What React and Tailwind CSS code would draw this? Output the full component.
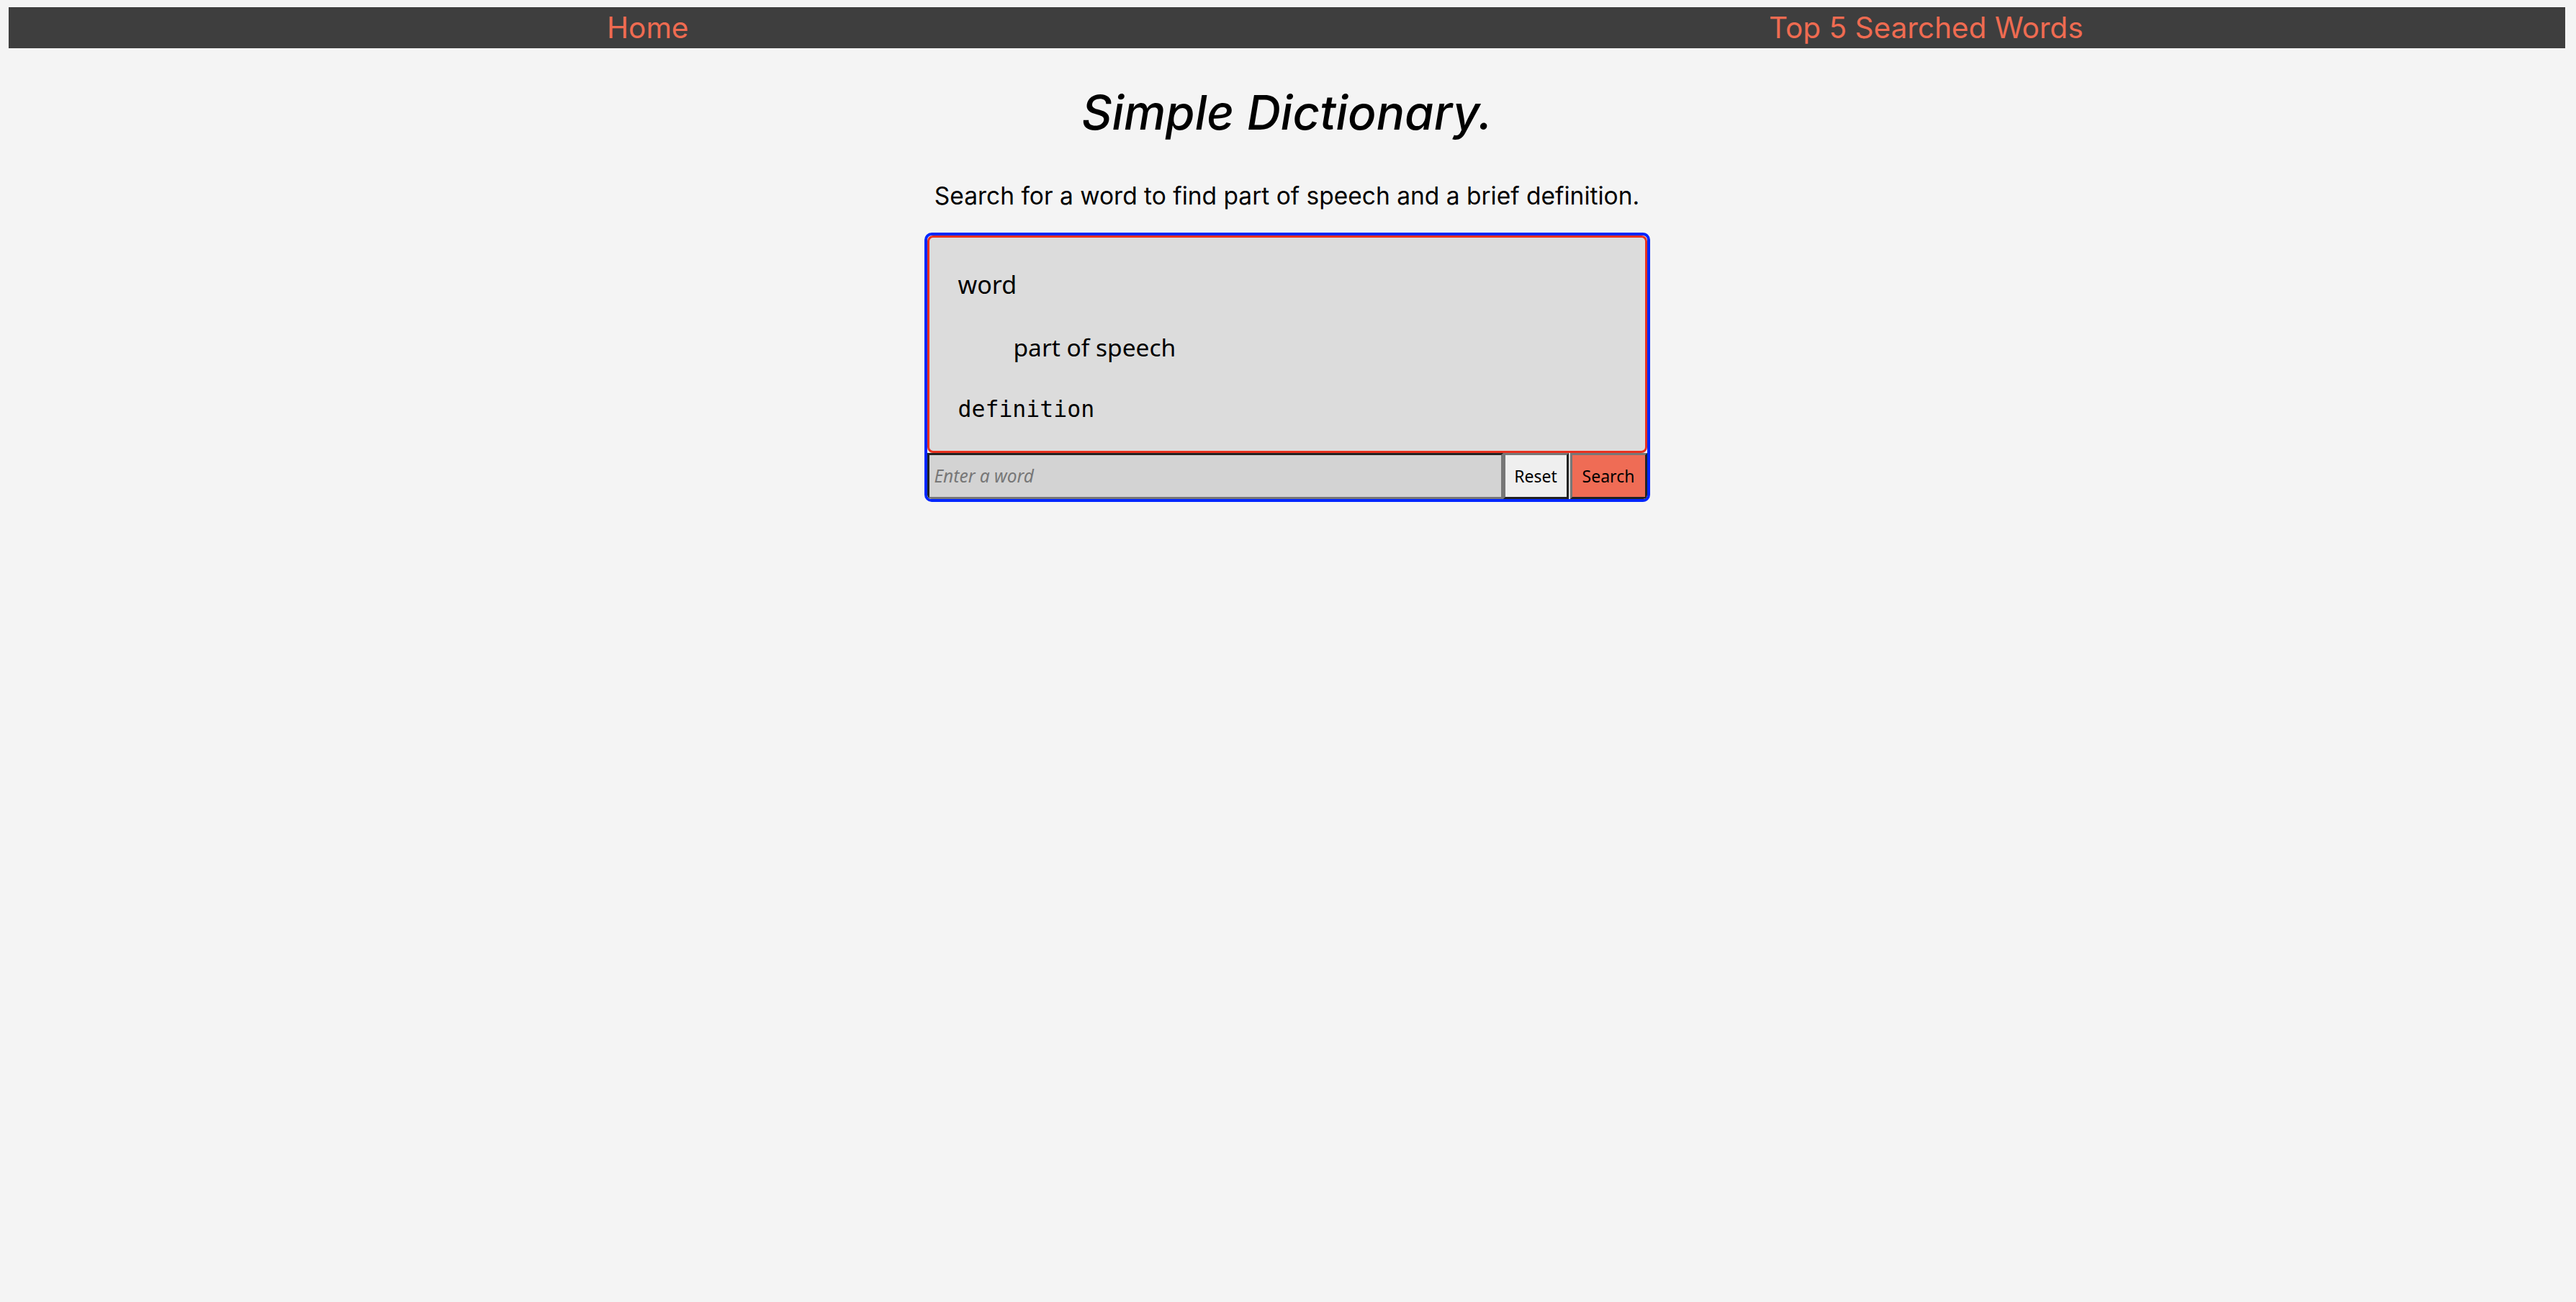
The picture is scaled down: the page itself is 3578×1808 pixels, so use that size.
export default function App() {
  return (
    <div className="min-h-screen bg-[#f4f4f4] pt-[10px] pl-[12px] pr-[15px] font-['Inter',sans-serif]">
      <nav className="flex h-[57px] bg-[#3e3e3e]">
        <a className="flex-1 text-center text-[#ef6b51] text-[40.5px] leading-[57px] font-['Inter',sans-serif]">Home</a>
        <a className="flex-1 text-center text-[#ef6b51] text-[40.5px] leading-[57px] font-['Inter',sans-serif]">Top 5 Searched Words</a>
      </nav>
      <h1 className="mt-[54px] text-center italic font-medium text-[65.5px] leading-[72px] text-black font-['Inter',sans-serif]">Simple Dictionary.</h1>
      <p className="mt-[63px] text-center text-[33.5px] leading-[32px] text-black font-['Inter',sans-serif]">Search for a word to find part of speech and a brief definition.</p>
      <div className="mx-auto mt-[35px] w-[1008px] rounded-[10px] border-4 border-[#0026ff] overflow-hidden">
        <div className="h-[302px] rounded-[8px] border-[3px] border-[#e8311f] bg-[#dcdcdc] pl-[40px] pt-[45px] font-['Noto_Sans',sans-serif] text-black">
          <div className="text-[34px] leading-[40px]">word</div>
          <div className="mt-[47px] pl-[77px] text-[33.5px] leading-[40px]">part of speech</div>
          <div className="mt-[48px] text-[31.5px] leading-[36px] font-['DejaVu_Sans_Mono',monospace]">definition</div>
        </div>
        <div className="flex h-[64px] bg-[#dcdcdc]">
          <input
            placeholder="Enter a word"
            className="min-w-0 flex-1 bg-[#d3d3d3] border-[3px] border-t-[#222222] border-l-[#222222] border-b-[#777777] border-r-[#777777] pl-[7px] text-[24.5px] font-['Noto_Sans',sans-serif] placeholder:italic placeholder:text-[#777777] outline-none"
          />
          <button className="w-[91px] bg-[#efefef] border-[3px] border-t-[#777777] border-l-[#777777] border-b-[#222222] border-r-[#222222] text-[23px] text-black font-['Noto_Sans',sans-serif]">Reset</button>
          <button className="ml-[2px] w-[107px] bg-[#ef6c55] border-[3px] border-t-[#777777] border-l-[#777777] border-b-[#222222] border-r-[#222222] text-[23px] text-black font-['Noto_Sans',sans-serif]">Search</button>
        </div>
      </div>
    </div>
  );
}
